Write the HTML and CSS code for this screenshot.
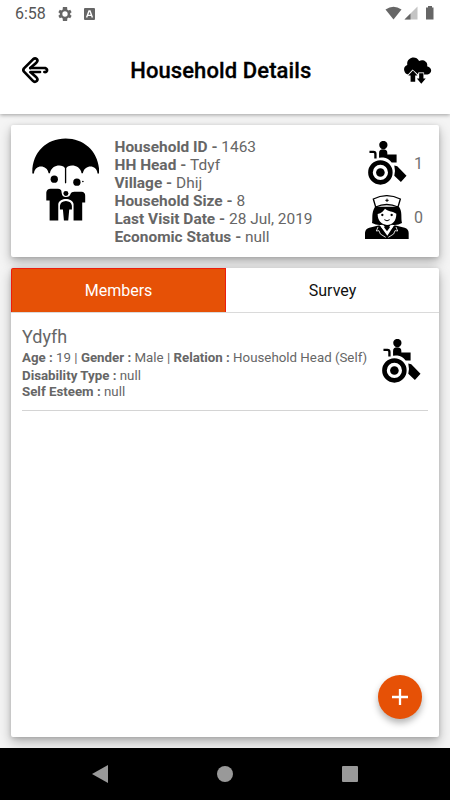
FILE: index.html
```html
<!DOCTYPE html>
<html lang="en">
<head>
<meta charset="utf-8">
<title>Household Details</title>
<link rel="stylesheet" href="styles.css">
</head>
<body>
<svg width="0" height="0" class="defs">
  <symbol id="wheelchair" viewBox="38 32 117 133">
    <circle cx="84" cy="44" r="12.500"/>
    <path d="M71 83V68Q71 57 83 57Q96 57 96 68V73H124V97H109Q99 84 84 82Q76 81 71 83Z"/>
    <path d="M42 65H54Q60 65 60 71V85" fill="none" stroke="#000" stroke-width="7"/>
    <circle cx="75" cy="127" r="30" fill="none" stroke="#000" stroke-width="14"/>
    <circle cx="75" cy="127" r="13"/>
    <path d="M117 106L126 108L154 137L137 156L117 137Q121 122 117 106Z"/>
  </symbol>
</svg>
<header class="top">
  <div class="status">
    <span class="clock">6:58</span>
    <svg class="gear" viewBox="2 2 20 20"><path fill-rule="evenodd" d="M19.4 13a7.8 7.8 0 0 0 0-2l2.1-1.6-2-3.5-2.5 1a7.5 7.5 0 0 0-1.7-1L15 2h-6l-.4 3.9a7.5 7.5 0 0 0-1.7 1l-2.4-1-2 3.5L4.6 11a7.8 7.8 0 0 0 0 2l-2.1 1.6 2 3.5 2.4-1a7.5 7.5 0 0 0 1.7 1L9 22h6l.4-3.9a7.5 7.5 0 0 0 1.7-1l2.4 1 2-3.5zM12 15.8a3.8 3.8 0 1 1 0-7.6 3.8 3.8 0 0 1 0 7.6z"/></svg>
    <svg class="abox" viewBox="0 0 11 12"><rect width="11" height="12" rx="1"/><path d="M2.6 9.5L5 3h1l2.4 6.5M3.6 7.4h3.8" fill="none" stroke="#fff" stroke-width="1.4"/></svg>
    <svg class="signals" viewBox="0 0 50 15">
      <path d="M.5 3.5Q8.500-2 16.500 3.500L8.500 13.500Z"/>
      <path d="M32.500.500V13.500H19.500Z" fill="#c4c4c4"/><path d="M25.500 7.500V13.500H19.500Z"/>
      <path d="M43 0h4v1.500h1.500V13.500h-7.500V1.500H43Z"/>
    </svg>
  </div>
  <div class="bar">
    <svg class="back" viewBox="66 170 80 80" fill="none" stroke="#000" stroke-width="8" stroke-linejoin="round" stroke-linecap="round">
      <path d="M91 203L109 187Q115 181 110 176Q105 172 99 177L72 204Q68 209 72 214L98 241Q104 247 110 242Q115 237 109 231L91 215H120"/>
      <path d="M91 203H135Q142 206 141 211Q139 216 133 215"/>
    </svg>
    <h1>Household Details</h1>
    <svg class="cloud" viewBox="104 169 83 82">
      <path d="M119 222A15 15 0 0 1 113 193C109 171 139 162 149 181C162 174 177 185 173 197C190 201 189 219 174 222H164V216H146V222L129 207L115 222Z"/>
      <path d="M130 210L144 225H137V244H123V225H116Z"/>
      <path d="M149 218H162V234H169L155.500 250L142 234H149Z" stroke="#fff" stroke-width="2" paint-order="stroke"/>
    </svg>
  </div>
</header>
<main>
  <section class="card summary">
    <svg class="family" viewBox="35 38 203 248">
      <path d="M36 144C34 83 77 39 136 39S239 83 237 144H232C230 116 193 116 188 143H184C180 115 143 115 138 128V172Q136 176 134 172V128C129 115 93 115 89 143H85C80 116 43 116 41 144Z"/>
      <circle cx="102" cy="161" r="11"/><circle cx="170" cy="170" r="11"/><circle cx="188" cy="168" r="2.500"/>
      <path d="M78 225V201Q79 191 91 190H113Q124 190 124 201C125 210 129 215 137 215S150 211 151 205Q153 199 162 199H184Q195 200 195 211V231H186V285H160V236C156 216 118 216 114 236V285H88V225Z"/>
      <circle cx="137" cy="204" r="7.500"/>
      <path d="M119 252V241Q121 228 137 227Q153 228 155 241V252H147L144 285H131L128 252Z"/>
    </svg>
    <div class="facts">
      <div><b>Household ID - </b>1463</div>
      <div><b>HH Head - </b>Tdyf</div>
      <div><b>Village - </b>Dhij</div>
      <div><b>Household Size - </b>8</div>
      <div><b>Last Visit Date - </b>28 Jul, 2019</div>
      <div><b>Economic Status - </b>null</div>
    </div>
    <div class="counts">
      <div class="count"><svg class="chair"><use href="#wheelchair"/></svg><span>1</span></div>
      <div class="count"><svg class="nurse" viewBox="30 195 132 132">
        <path d="M60 230C48 250 54 266 51 279Q66 287 82 284L88 293H104L110 284Q126 288 141 279C137 263 143 246 132 230Z"/>
        <path d="M68 252C79 250 86 242 90 236C101 245 113 243 124 251C124 273 113 284 96 285C79 284 68 272 68 253Z" fill="#fff"/>
        <path d="M62 231L55 207Q95 187 136 207L129 231Q95 216 62 231Z" fill="#fff" stroke="#000" stroke-width="4"/>
        <path d="M91 211H101M96 206V216" stroke="#000" stroke-width="3"/>
        <circle cx="82" cy="255" r="3.500"/><circle cx="110" cy="255" r="3.500"/>
        <path d="M88 269Q96 276 104 269" fill="none" stroke="#000" stroke-width="3"/>
        <path d="M30 327V308Q31 296 43 293L73 286L96 308L119 286L149 293Q161 297 161 309V327Z"/>
        <path d="M84 284L88 289L96 301L104 289L108 284L114 291L97 317L78 291Z" fill="#fff"/>
        <path d="M87 292L96 288L105 292L96 304Z"/>
        <path d="M69 291L64 303L72 302L76 312L92 322M123 291L128 303L120 302L116 312L100 322" fill="none" stroke="#fff" stroke-width="2.500"/>
      </svg><span>0</span></div>
    </div>
  </section>
  <section class="card members">
    <nav class="tabs"><div class="tab active">Members</div><div class="tab">Survey</div></nav>
    <article class="member">
      <div class="info">
        <h2>Ydyfh</h2>
        <p class="line1"><b>Age : </b>19 | <b>Gender : </b>Male | <b>Relation : </b>Household Head (Self)</p>
        <p class="line2"><b>Disability Type : </b>null</p>
        <p class="line3"><b>Self Esteem : </b>null</p>
      </div>
      <svg class="chair"><use href="#wheelchair"/></svg>
    </article>
    <button class="fab" aria-label="Add member"><svg viewBox="0 0 16 16"><path d="M8 0V16M0 8H16"/></svg></button>
  </section>
</main>
<footer class="nav">
  <svg viewBox="0 0 16 18"><path d="M0 9L16 0V18Z"/></svg>
  <svg viewBox="0 0 16 18"><circle cx="8" cy="9" r="8"/></svg>
  <svg viewBox="0 0 16 18"><rect y="1" width="16" height="16" rx="1"/></svg>
</footer>
</body>
</html>
```
FILE: styles.css
```css
* { box-sizing: border-box; }
body {
  margin: 0;
  width: 450px;
  height: 800px;
  overflow: hidden;
  display: flex;
  flex-direction: column;
  font-family: Roboto, "Liberation Sans", sans-serif;
  color: #666;
  background: #f4f4f4;
}
h1, h2, p { margin: 0; }
svg { display: block; flex: none; }
.defs { position: absolute; }
.top {
  height: 114px;
  flex: none;
  background: #fff;
  box-shadow: 0 1px 4px rgba(0, 0, 0, .35);
  z-index: 1;
}
.status {
  height: 27px;
  padding: 0 15px;
  display: flex;
  align-items: center;
  fill: #666;
}
.clock { font-size: 16px; color: #555; width: 43px; line-height: 27px; }
.gear { width: 14px; height: 14px; }
.abox { width: 11px; height: 12px; margin-left: 12px; }
.signals { width: 50px; height: 15px; margin-left: auto; }
.bar {
  height: 87px;
  padding: 0 18px 0 22px;
  display: flex;
  align-items: center;
}
.back { width: 26.7px; height: 26.7px; }
.cloud { width: 28px; height: 27px; margin-left: auto; }
h1 { margin-left: 81.500px; font-size: 22px; font-weight: 500; letter-spacing: .1px; -webkit-text-stroke: .3px #000; color: #000; line-height: 30px; }
main {
  flex: 1;
  min-height: 0;
  padding: 11px 11px 11px;
  display: flex;
  flex-direction: column;
  gap: 11px;
}
.card {
  background: #fff;
  border-radius: 2px;
  box-shadow: 0 5px 12px rgba(0, 0, 0, .28), 0 1px 4px rgba(0, 0, 0, .14);
}
.summary { height: 132px; flex: none; display: flex; padding: 12px 14px 0 20.500px; }
.family { width: 67.500px; height: 83px; margin-top: 1px; }
.facts { margin-left: 15.500px; font-size: 15.450px; line-height: 18px; padding-top: 1px; }
.facts div, .info p { white-space: pre; }
b { font-weight: 700; }
.counts { margin-left: auto; width: 61px; }
.chair { width: 39px; height: 44px; }
.count { display: flex; font-size: 16px; color: #707070; }
.count .chair { margin: 4px 0 0 3.500px; }
.count span { margin: 17px 2px 0 auto; line-height: 20px; }
.nurse { width: 44px; height: 44px; margin: 10px 0 0 .5px; }
.nurse + span { margin-top: 23px; }
.members { flex: 1; min-height: 0; position: relative; }
.tabs { height: 45px; display: flex; border-bottom: 1px solid #dadada; }
.tab { flex: 1; line-height: 45px; text-align: center; font-size: 16px; color: #111; }
.tab.active { background: #e65106; color: #fff; border: 1px solid #ed1c0d; border-bottom: 0; line-height: 44px; border-radius: 2px 0 0; }
.member {
  margin: 0 11px;
  height: 98px;
  display: flex;
  justify-content: space-between;
  border-bottom: 1px solid #d4d4d4;
}
.member .chair { margin: 26px 7.500px 0 0; }
.info { padding-top: 13px; font-size: 13.300px; }
h2 { font-size: 18px; font-weight: 400; line-height: 22px; }
.line1 { line-height: 19px; }
.line2 { line-height: 17px; }
.line3 { line-height: 15px; }
.fab {
  position: absolute;
  right: 17.500px;
  bottom: 18px;
  width: 44px;
  height: 44px;
  border: 0;
  border-radius: 50%;
  background: #e65106;
  display: grid;
  place-items: center;
  box-shadow: 0 4px 7px rgba(0, 0, 0, .3);
}
.fab svg { width: 16px; height: 16px; stroke: #fff; stroke-width: 2.300; }
.nav {
  height: 52px;
  flex: none;
  background: #000;
  z-index: 1;
  display: flex;
  align-items: center;
  justify-content: space-between;
  padding: 0 92.500px 0 91.500px;
  fill: #999;
}
.nav svg { width: 16px; height: 18px; }
```
